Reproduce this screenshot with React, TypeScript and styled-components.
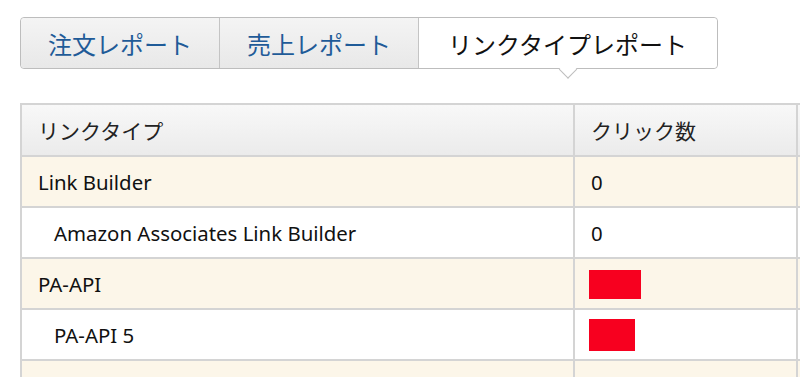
import React from "react";
import styled, { createGlobalStyle } from "styled-components";

// Link-type report: tab strip + stat table

type Row = { label: string; clicks: number | null; sub?: boolean; redact?: number };

const ROWS: Row[] = [
  { label: "Link Builder", clicks: 0 },
  { label: "Amazon Associates Link Builder", clicks: 0, sub: true },
  { label: "PA-API", clicks: null, redact: 52 },
  { label: "PA-API 5", clicks: null, sub: true, redact: 46 },
  { label: "", clicks: null },
];

const TABS = ["注文レポート", "売上レポート", "リンクタイプレポート"];

const GlobalStyle = createGlobalStyle`
  html, body { margin: 0; padding: 0; background: #fff; overflow: hidden; }
  body { font-family: "Noto Sans", "Noto Sans CJK JP", sans-serif; color: #111; }
`;

const Page = styled.div`
  padding: 17px 0 0 20px;
  width: 1000px;
`;

const TabStrip = styled.div`
  display: inline-flex;
  border: 1px solid #bdbdbd;
  border-radius: 4px;
  height: 50px;
`;

const Tab = styled.div<{ $active: boolean }>`
  position: relative;
  display: flex;
  align-items: center;
  padding: ${(p) => (p.$active ? "0 30px 0 29px" : "0 27px")};
  font-family: "Noto Sans CJK JP", sans-serif;
  font-size: 24px;
  color: ${(p) => (p.$active ? "#111" : "#1f5b98")};
  background: ${(p) => (p.$active ? "#fff" : "linear-gradient(#f4f4f4, #e8e8e8)")};
  border-left: 1px solid #c4c4c4;
  &:first-child { border-left: none; border-radius: 4px 0 0 4px; }
  &:last-child { border-radius: 0 4px 4px 0; }

  ${(p) =>
    p.$active &&
    `
    &::after {
      content: "";
      position: absolute;
      left: 50%;
      bottom: -8px;
      width: 12px;
      height: 12px;
      background: #fff;
      border-right: 1px solid #bdbdbd;
      border-bottom: 1px solid #bdbdbd;
      transform: translateX(-50%) rotate(45deg);
    }
  `}
`;

const Table = styled.table`
  margin-top: 34px;
  border-collapse: collapse;
  table-layout: fixed;
  width: 880px;
`;

const HeadCell = styled.th`
  height: 50px;
  padding: 0 0 0 16px;
  text-align: left;
  font-weight: normal;
  font-family: "Noto Sans CJK JP", sans-serif;
  font-size: 21px;
  color: #222;
  background: linear-gradient(#f8f8f8, #ebebeb);
  border: 2px solid #d4d4d4;
`;

const BodyRow = styled.tr<{ $alt: boolean }>`
  background: ${(p) => (p.$alt ? "#fcf6e9" : "#fff")};
`;

const Cell = styled.td<{ $indent?: boolean }>`
  height: 49px;
  padding: 0 0 0 ${(p) => (p.$indent ? 32 : 16)}px;
  font-size: 20.4px;
  color: #111;
  border: 2px solid #d4d4d4;
  vertical-align: middle;
`;

const Redact = styled.span<{ $tall: boolean }>`
  display: inline-block;
  margin-left: -2px;
  height: ${(p) => (p.$tall ? 32 : 29)}px;
  background: #f7001f;
  vertical-align: middle;
`;

export default function App() {
  return (
    <>
      <GlobalStyle />
      <Page>
        <TabStrip>
          {TABS.map((t, i) => (
            <Tab key={t} $active={i === TABS.length - 1}>
              {t}
            </Tab>
          ))}
        </TabStrip>
        <Table>
          <colgroup>
            <col style={{ width: 553 }} />
            <col style={{ width: 223 }} />
            <col />
          </colgroup>
          <thead>
            <tr>
              <HeadCell>リンクタイプ</HeadCell>
              <HeadCell>クリック数</HeadCell>
              <HeadCell />
            </tr>
          </thead>
          <tbody>
            {ROWS.map((r, i) => (
              <BodyRow key={i} $alt={i % 2 === 0}>
                <Cell $indent={r.sub}>{r.label}</Cell>
                <Cell>
                  {r.redact ? (
                    <Redact $tall={!!r.sub} style={{ width: r.redact }} />
                  ) : (
                    r.clicks
                  )}
                </Cell>
                <Cell />
              </BodyRow>
            ))}
          </tbody>
        </Table>
      </Page>
    </>
  );
}
